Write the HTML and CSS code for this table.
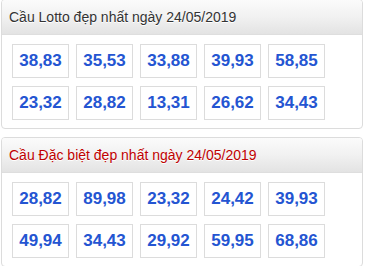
FILE: index.html
```html
<!DOCTYPE html>
<html>
<head>
<meta charset="utf-8">
<link rel="stylesheet" href="styles.css">
</head>
<body>
<div class="page">
  <section class="panel">
    <div class="panel-head">Cầu Lotto đẹp nhất ngày 24/05/2019</div>
    <div class="panel-body">
      <div class="num">38,83</div>
      <div class="num">35,53</div>
      <div class="num">33,88</div>
      <div class="num">39,93</div>
      <div class="num">58,85</div>
      <div class="num">23,32</div>
      <div class="num">28,82</div>
      <div class="num">13,31</div>
      <div class="num">26,62</div>
      <div class="num">34,43</div>
    </div>
  </section>
  <section class="panel">
    <div class="panel-head red">Cầu Đặc biệt đẹp nhất ngày 24/05/2019</div>
    <div class="panel-body">
      <div class="num">28,82</div>
      <div class="num">89,98</div>
      <div class="num">23,32</div>
      <div class="num">24,42</div>
      <div class="num">39,93</div>
      <div class="num">49,94</div>
      <div class="num">34,43</div>
      <div class="num">29,92</div>
      <div class="num">59,95</div>
      <div class="num">68,86</div>
    </div>
  </section>
</div>
</body>
</html>
```
FILE: styles.css
```css
html, body {
  margin: 0;
  padding: 0;
  background: #fff;
}
body {
  font-family: "Liberation Sans", Arial, sans-serif;
}
.page {
  width: 362px;
  margin: -1px 0 0 1px;
  display: flex;
  flex-direction: column;
  gap: 8px;
}
.panel {
  border: 1px solid #dcdcdc;
  border-radius: 4px;
  background: #fff;
  overflow: hidden;
}
.panel-head {
  height: 34px;
  line-height: 34px;
  padding-left: 7px;
  font-size: 14px;
  color: #333;
  text-shadow: 0 1px 0 #fff;
  background: linear-gradient(to bottom, #fbfbfb 0%, #f1f1f1 50%, #e3e3e3 100%);
  border-bottom: 1px solid #dedede;
}
.panel-head.red {
  color: #c00000;
}
.panel-body {
  display: grid;
  grid-template-columns: repeat(5, 57px);
  column-gap: 7px;
  row-gap: 8px;
  padding: 9px 0 8px 10px;
}
.num {
  height: 34px;
  box-sizing: border-box;
  border: 1px solid #dcdcdc;
  display: flex;
  align-items: center;
  justify-content: center;
  font-size: 17px;
  font-weight: bold;
  color: #2455d2;
}
```
